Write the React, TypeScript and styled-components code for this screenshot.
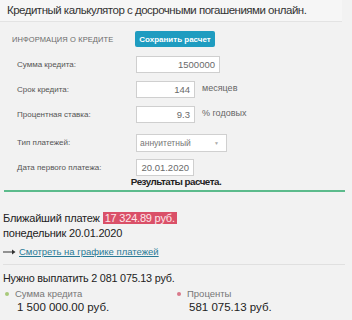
import React from 'react';
import styled, { createGlobalStyle } from 'styled-components';

const GlobalStyle = createGlobalStyle`
  html, body {
    margin: 0;
    padding: 0;
    background: #f2f2f2;
    font-family: "Liberation Sans", Arial, sans-serif;
  }
`;

const Page = styled.div`
  width: 352px;
  height: 320px;
  overflow: hidden;
  background: #f2f2f2;
  color: #222;
`;

const Title = styled.div`
  padding: 2px 0 0 7px;
  height: 19px;
  font-size: 11.5px;
  letter-spacing: -0.5px;
  line-height: 16px;
  white-space: nowrap;
  color: #333;
  background: #f6f6f6;
  border-bottom: 1px solid #e3e3e3;
  margin-right: 10px;
`;

const Form = styled.div`
  padding: 9px 0 0 12px;
`;

const HeadRow = styled.div`
  display: flex;
  align-items: center;
  height: 16px;
  margin-bottom: 9px;
`;

const SectionLabel = styled.div`
  width: 123px;
  font-size: 7.5px;
  color: #6a6a6a;
  text-transform: uppercase;
  letter-spacing: 0.1px;
`;

const SaveButton = styled.button`
  height: 16px;
  width: 80px;
  padding: 0;
  border: none;
  border-radius: 2px;
  background: #1f9cc0;
  color: #fff;
  font-family: "Liberation Sans", Arial, sans-serif;
  font-size: 8px;
  font-weight: bold;
`;

const Row = styled.div<{ $gap: number }>`
  display: flex;
  align-items: center;
  height: 17px;
  margin-top: ${(p) => p.$gap}px;
  padding-left: 5px;
`;

const Label = styled.div`
  width: 119px;
  font-size: 8px;
  color: #555;
`;

const Field = styled.div<{ $width: number }>`
  box-sizing: border-box;
  width: ${(p) => p.$width}px;
  height: 17px;
  background: #fff;
  border: 1px solid #cfcfcf;
  font-size: 9.5px;
  color: #6a6a6a;
  line-height: 15px;
  text-align: right;
  padding-right: 4px;
`;

const Select = styled.div`
  box-sizing: border-box;
  width: 91px;
  height: 18px;
  background: #fff;
  border: 1px solid #d0d0d0;
  font-size: 8.5px;
  color: #777;
  display: flex;
  align-items: center;
  justify-content: space-between;
  padding: 0 7px 0 3px;
`;

const Arrow = styled.span`
  font-size: 5px;
  color: #aaa;
`;

const Unit = styled.div`
  margin-left: 7px;
  font-size: 9px;
  color: #666;
  margin-top: -4px;
`;

const ResultsTitle = styled.div`
  text-align: center;
  font-size: 9.8px;
  letter-spacing: -0.5px;
  font-weight: bold;
  padding-left: 0;
  line-height: 12px;
`;

const GreenLine = styled.div`
  height: 2px;
  margin: 2px 7px 0 4px;
  background: #5cbb8c;
`;

const Results = styled.div`
  padding: 19px 0 0 3px;
  font-size: 11px;
  letter-spacing: -0.2px;
  line-height: 15px;
`;

const Highlight = styled.span`
  background: #da5068;
  color: #fde6ea;
  padding: 0 2px;
`;

const LinkRow = styled.div`
  display: flex;
  align-items: center;
  gap: 3px;
  margin-top: 3px;
  font-size: 9.5px;
  letter-spacing: 0;
  padding-bottom: 5px;
  border-bottom: 1px solid #e0e0e0;
  margin-right: 7px;
`;

const ArrowIcon = styled.svg`
  width: 13px;
  height: 6px;
`;

const Link = styled.a`
  color: #2a7a96;
  text-decoration: underline;
`;

const Total = styled.div`
  padding: 6px 0 0 3px;
  font-size: 10.8px;
  letter-spacing: -0.2px;
  line-height: 14px;
`;

const Parts = styled.div`
  display: flex;
  margin-top: 3px;
  padding-left: 5px;
`;

const Part = styled.div`
  width: 172px;
`;

const PartLabel = styled.div`
  display: flex;
  align-items: center;
  gap: 6px;
  font-size: 9.5px;
  color: #777;
  line-height: 12px;
`;

const Dot = styled.span<{ $color: string }>`
  width: 4px;
  height: 4px;
  border-radius: 50%;
  background: ${(p) => p.$color};
`;

const PartValue = styled.div`
  padding-left: 12px;
  font-size: 11.5px;
  line-height: 14px;
  color: #222;
`;

export default function App() {
  return (
    <Page>
      <GlobalStyle />
      <Title>Кредитный калькулятор с досрочными погашениями онлайн.</Title>
      <Form>
        <HeadRow>
          <SectionLabel>Информация о кредите</SectionLabel>
          <SaveButton>Сохранить расчет</SaveButton>
        </HeadRow>
        <Row $gap={0}>
          <Label>Сумма кредита:</Label>
          <Field $width={84}>1500000</Field>
        </Row>
        <Row $gap={8}>
          <Label>Срок кредита:</Label>
          <Field $width={59}>144</Field>
          <Unit>месяцев</Unit>
        </Row>
        <Row $gap={8}>
          <Label>Процентная ставка:</Label>
          <Field $width={59}>9.3</Field>
          <Unit>% годовых</Unit>
        </Row>
        <Row $gap={11}>
          <Label>Тип платежей:</Label>
          <Select>
            аннуитетный <Arrow>▼</Arrow>
          </Select>
        </Row>
        <Row $gap={8}>
          <Label>Дата первого платежа:</Label>
          <Field $width={58}>20.01.2020</Field>
        </Row>
      </Form>
      <ResultsTitle>Результаты расчета.</ResultsTitle>
      <GreenLine />
      <Results>
        <div>
          Ближайший платеж <Highlight>17 324.89 руб.</Highlight>
        </div>
        <div>понедельник 20.01.2020</div>
        <LinkRow>
          <ArrowIcon viewBox="0 0 13 6">
            <path d="M0 3 H10" stroke="#333" strokeWidth="1" />
            <path d="M9 0.5 L12.5 3 L9 5.5 Z" fill="#333" />
          </ArrowIcon>
          <Link>Смотреть на графике платежей</Link>
        </LinkRow>
      </Results>
      <Total>Нужно выплатить 2 081 075.13 руб.</Total>
      <Parts>
        <Part>
          <PartLabel>
            <Dot $color="#a8c97a" />
            Сумма кредита
          </PartLabel>
          <PartValue>1 500 000.00 руб.</PartValue>
        </Part>
        <Part>
          <PartLabel>
            <Dot $color="#d9788a" />
            Проценты
          </PartLabel>
          <PartValue>581 075.13 руб.</PartValue>
        </Part>
      </Parts>
    </Page>
  );
}
